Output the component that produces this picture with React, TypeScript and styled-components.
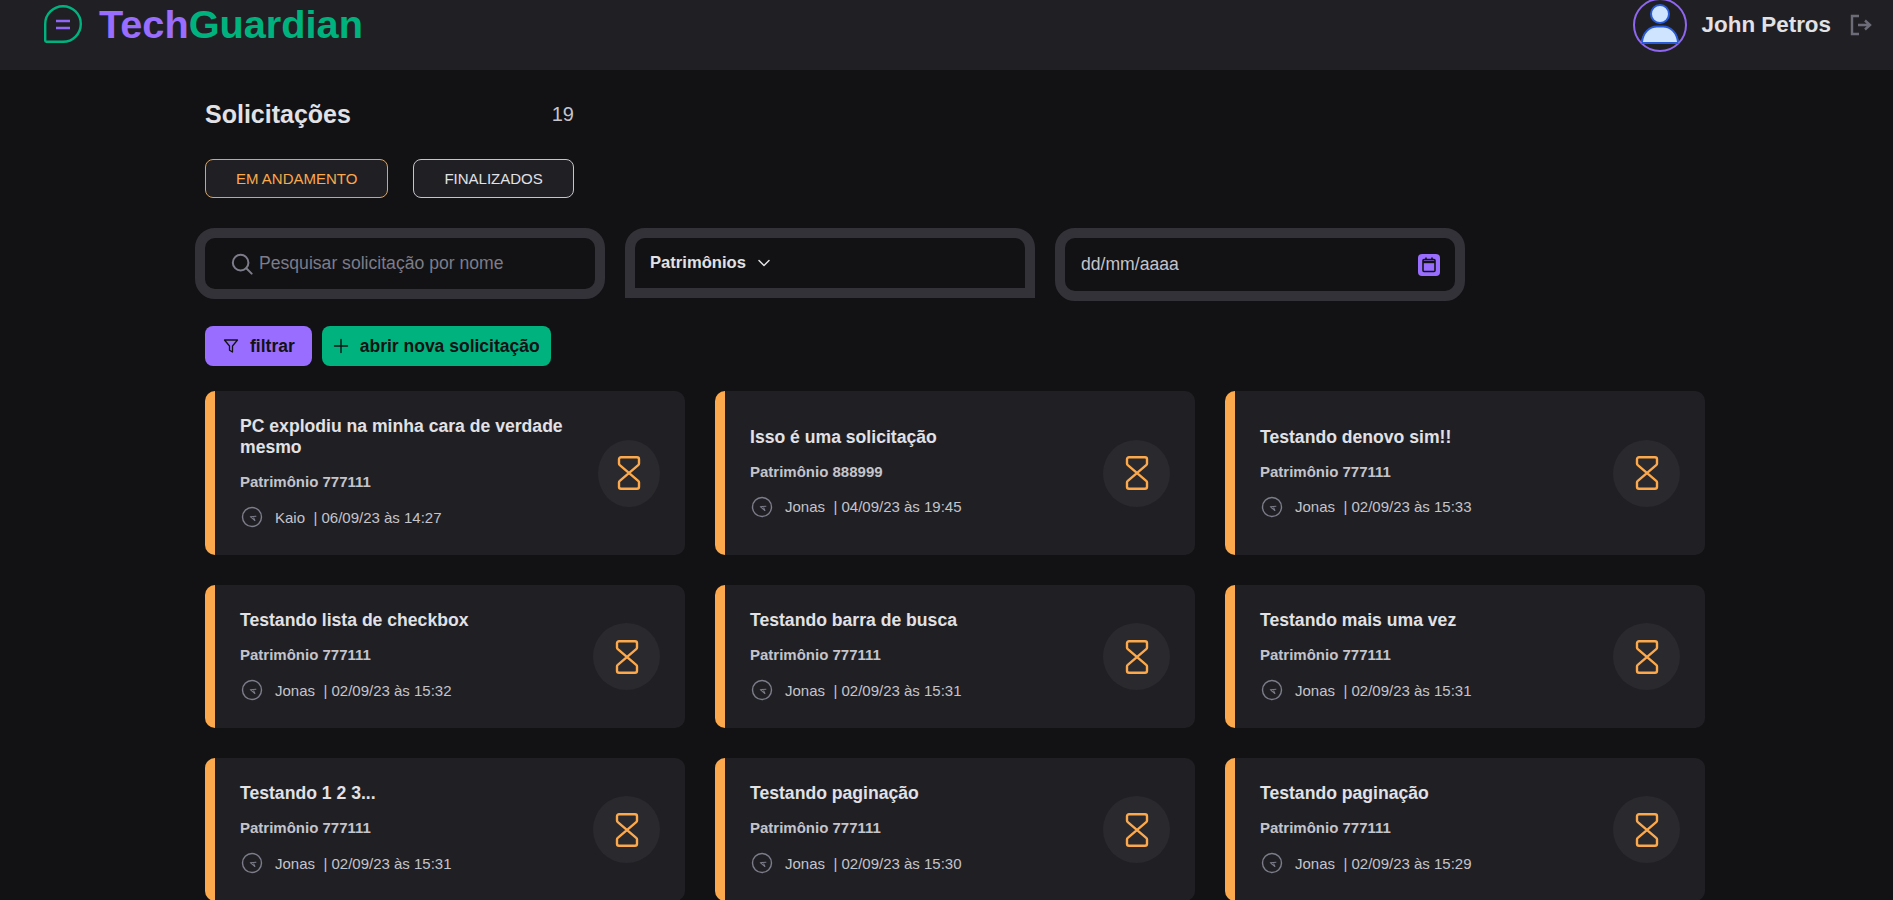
import styled, { createGlobalStyle } from 'styled-components'

const requests = [
  { title: 'PC explodiu na minha cara de verdade mesmo', asset: '777111', user: 'Kaio', date: '06/09/23 às 14:27' },
  { title: 'Isso é uma solicitação', asset: '888999', user: 'Jonas', date: '04/09/23 às 19:45' },
  { title: 'Testando denovo sim!!', asset: '777111', user: 'Jonas', date: '02/09/23 às 15:33' },
  { title: 'Testando lista de checkbox', asset: '777111', user: 'Jonas', date: '02/09/23 às 15:32' },
  { title: 'Testando barra de busca', asset: '777111', user: 'Jonas', date: '02/09/23 às 15:31' },
  { title: 'Testando mais uma vez', asset: '777111', user: 'Jonas', date: '02/09/23 às 15:31' },
  { title: 'Testando 1 2 3...', asset: '777111', user: 'Jonas', date: '02/09/23 às 15:31' },
  { title: 'Testando paginação', asset: '777111', user: 'Jonas', date: '02/09/23 às 15:30' },
  { title: 'Testando paginação', asset: '777111', user: 'Jonas', date: '02/09/23 às 15:29' },
]

function LogoIcon() {
  return (
    <LogoSvg viewBox="0 0 38 38" fill="none">
      <path
        d="M1.2 35.6V19A17.8 17.8 0 1 1 19 36.8H2.4A1.2 1.2 0 0 1 1.2 35.6Z"
        stroke="#00B37E"
        strokeWidth="2.4"
      />
      <path d="M12 16h14M12 23h14" stroke="#8F66F5" strokeWidth="2.4" />
    </LogoSvg>
  )
}

function UserIcon() {
  return (
    <svg width="54" height="54" viewBox="0 0 54 54" fill="none">
      <circle cx="27" cy="27" r="26" stroke="#8F66F0" strokeWidth="2" />
      <circle cx="27" cy="16" r="9" fill="#CFE4FF" stroke="#2A5BD7" strokeWidth="2" />
      <path d="M8.5 45c0-9 7-16 15-16h7c8 0 15 7 15 16z" fill="#CFE4FF" />
      <path
        d="M9 44c1-9 7-15.5 15-15.5h6c8 0 14 6.500 15 15.500M8.500 45h37"
        stroke="#2A5BD7"
        strokeWidth="2"
      />
    </svg>
  )
}

function LogoutIcon() {
  return (
    <svg width="22" height="22" viewBox="0 0 22 22" fill="none" stroke="#6C6C78" strokeWidth="2.400">
      <path d="M9 2H2v18h7" />
      <path d="M8 11h12M15 6.500l5 4.500-5 4.500" />
    </svg>
  )
}

function SearchIcon() {
  return (
    <svg width="22" height="22" viewBox="0 0 24 24" fill="none" stroke="#7C7C8A" strokeWidth="2.200" strokeLinecap="round">
      <circle cx="10.500" cy="10.500" r="8.500" />
      <path d="M16.700 16.700L22.500 22.500" />
    </svg>
  )
}

function CaretIcon() {
  return (
    <svg width="16" height="16" viewBox="0 0 16 16" fill="none" stroke="#E1E1E6" strokeWidth="1.500" strokeLinecap="round" strokeLinejoin="round">
      <path d="M3 5.500l5 5 5-5" />
    </svg>
  )
}

function CalendarIcon() {
  return (
    <CalendarBadge>
      <svg width="14" height="16" viewBox="0 0 14 16" fill="none" stroke="#121214" strokeWidth="1.600">
        <rect x="1" y="2.500" width="12" height="12" rx="1" />
        <path d="M1 5h12" strokeWidth="2.400" />
        <path d="M4 .500v2M10 .500v2" />
      </svg>
    </CalendarBadge>
  )
}

function FunnelIcon() {
  return (
    <svg width="16" height="16" viewBox="0 0 16 16" fill="none" stroke="#121214" strokeWidth="1.300" strokeLinejoin="round">
      <path d="M1.500 2h13l-5 6v6l-3-1.800V8z" />
    </svg>
  )
}

function PlusIcon() {
  return (
    <svg width="16" height="16" viewBox="0 0 16 16" fill="none" stroke="#121214" strokeWidth="1.400" strokeLinecap="round">
      <path d="M1.500 8h13M8 1.500v13" />
    </svg>
  )
}

function ClockIcon() {
  return (
    <svg width="22" height="22" viewBox="0 0 22 22" fill="none" stroke="#7C7C8A" strokeWidth="1.400" strokeLinejoin="round">
      <circle cx="11" cy="11" r="9.500" />
      <path d="M15.300 10.200L9.300 10.700L14 14.700" strokeWidth="1.100" />
      <path d="M12.500 11.500L14 14.700" strokeWidth="1.100" />
    </svg>
  )
}

function HourglassIcon() {
  return (
    <svg width="24" height="34" viewBox="0 0 24 34" fill="none" stroke="#FBA94C" strokeWidth="2.400" strokeLinejoin="round">
      <path d="M4 1.200h16a2 2 0 0 1 2 2v4.300a2 2 0 0 1-.8 1.600L2.800 24.900A2 2 0 0 0 2 26.500v4.300a2 2 0 0 0 2 2h16a2 2 0 0 0 2-2v-4.300a2 2 0 0 0-.8-1.600L2.800 9.100A2 2 0 0 1 2 7.500V3.200a2 2 0 0 1 2-2z" />
    </svg>
  )
}

export default function App() {
  return (
    <>
      <GlobalStyle />
      <Header>
        <Brand>
          <LogoIcon />
          <BrandName>
            <span>Tech</span>
            <BrandAccent>Guardian</BrandAccent>
          </BrandName>
        </Brand>
        <Account>
          <UserIcon />
          <UserName>John Petros</UserName>
          <LogoutIcon />
        </Account>
      </Header>
      <Main>
        <TitleRow>
          <PageTitle>Solicitações</PageTitle>
          <Count>19</Count>
        </TitleRow>
        <Tabs>
          <Tab $active>EM ANDAMENTO</Tab>
          <Tab>FINALIZADOS</Tab>
        </Tabs>
        <Filters>
          <FieldBox>
            <SearchIcon />
            <SearchInput placeholder="Pesquisar solicitação por nome" />
          </FieldBox>
          <SelectBox>
            <SelectLabel>Patrimônios</SelectLabel>
            <CaretIcon />
          </SelectBox>
          <DateBox>
            <DateText>dd/mm/aaaa</DateText>
            <CalendarIcon />
          </DateBox>
        </Filters>
        <Actions>
          <ActionButton $bg="#996DFF" $padding="0 17px 0 18px">
            <FunnelIcon />
            filtrar
          </ActionButton>
          <ActionButton $bg="#00B37E" $padding="0 11px">
            <PlusIcon />
            abrir nova solicitação
          </ActionButton>
        </Actions>
        <CardGrid>
          {requests.map((item, index) => (
            <Card key={index}>
              <CardBody>
                <CardTitle>{item.title}</CardTitle>
                <CardAsset>Patrimônio {item.asset}</CardAsset>
                <CardMeta>
                  <ClockIcon />
                  <MetaText>
                    {item.user}
                    {'\u00a0 '}| {item.date}
                  </MetaText>
                </CardMeta>
              </CardBody>
              <StatusCircle>
                <HourglassIcon />
              </StatusCircle>
            </Card>
          ))}
        </CardGrid>
      </Main>
    </>
  )
}

const GlobalStyle = createGlobalStyle`
  * {
    box-sizing: border-box;
  }
  html, body {
    margin: 0;
    height: 100vh;
    overflow: hidden;
    background: #121214;
    font-family: 'Liberation Sans', Arial, sans-serif;
  }
`

const Header = styled.header`
  height: 70px;
  background: #202024;
  display: flex;
  align-items: flex-start;
  justify-content: space-between;
  padding: 0 21px 0 44px;
`

const Brand = styled.div`
  display: flex;
  align-items: center;
  gap: 17px;
  height: 48px;
`

const LogoSvg = styled.svg`
  width: 38px;
  height: 38px;
`

const BrandName = styled.div`
  font-size: 39.7px;
  font-weight: 700;
  color: #996dff;
`

const BrandAccent = styled.span`
  color: #00b37e;
`

const Account = styled.div`
  display: flex;
  align-items: center;
  height: 52px;
  margin-top: -1px;
  gap: 15px;
`

const UserName = styled.span`
  font-size: 22.4px;
  font-weight: 700;
  color: #e1e1e6;
  margin-right: 4px;
`

const Main = styled.main`
  padding: 0 0 0 205px;
`

const TitleRow = styled.div`
  display: flex;
  align-items: center;
  justify-content: space-between;
  width: 369px;
  height: 28px;
  margin-top: 30px;
`

const PageTitle = styled.h1`
  margin: 0;
  font-size: 25px;
  font-weight: 700;
  color: #e1e1e6;
`

const Count = styled.span`
  font-size: 20px;
  color: #c4c4cc;
`

const Tabs = styled.div`
  display: flex;
  gap: 25px;
  margin-top: 31px;
`

const Tab = styled.button<{ $active?: boolean }>`
  height: 39px;
  padding: 0 30px;
  border-radius: 8px;
  background: #202024;
  border: 1px solid ${(p) => (p.$active ? '#E8A04C' : '#C4C4CC')};
  color: ${(p) => (p.$active ? '#FBA94C' : '#E1E1E6')};
  font-family: inherit;
  font-size: 15px;
`

const Filters = styled.div`
  display: flex;
  align-items: flex-start;
  gap: 20px;
  margin: 30px 0 0 -10px;
`

const FieldBox = styled.div`
  width: 410px;
  height: 71px;
  border: 10px solid #323238;
  border-radius: 20px;
  background: #121214;
  display: flex;
  align-items: center;
  gap: 6px;
  padding: 0 26px;
`

const SearchInput = styled.input`
  flex: 1;
  min-width: 0;
  border: 0;
  outline: 0;
  padding: 0;
  background: transparent;
  color: #e1e1e6;
  font-family: inherit;
  font-size: 17.6px;
  &::placeholder {
    color: #7c7c8a;
    opacity: 1;
  }
`

const SelectBox = styled.div`
  width: 410px;
  height: 70px;
  border: 10px solid #323238;
  border-radius: 20px 20px 0 0;
  background: #121214;
  display: flex;
  align-items: center;
  gap: 10px;
  padding: 0 15px;
`

const SelectLabel = styled.span`
  font-size: 16.6px;
  font-weight: 700;
  color: #e1e1e6;
`

const DateBox = styled(FieldBox)`
  height: 73px;
  justify-content: space-between;
  padding: 0 15px 0 16px;
`

const DateText = styled.span`
  font-size: 17.6px;
  color: #c4c4cc;
`

const CalendarBadge = styled.span`
  width: 22px;
  height: 22px;
  border-radius: 4px;
  background: #996dff;
  display: flex;
  align-items: center;
  justify-content: center;
`

const Actions = styled.div`
  display: flex;
  gap: 10px;
  margin-top: 25px;
`

const ActionButton = styled.button<{ $bg: string; $padding: string }>`
  height: 40px;
  padding: ${(p) => p.$padding};
  border: 0;
  border-radius: 8px;
  background: ${(p) => p.$bg};
  color: #121214;
  display: flex;
  align-items: center;
  gap: 11px;
  font-family: inherit;
  font-size: 17.5px;
  font-weight: 700;
`

const CardGrid = styled.div`
  display: grid;
  grid-template-columns: repeat(3, 480px);
  column-gap: 30px;
  row-gap: 30px;
  margin-top: 25px;
`

const Card = styled.article`
  display: flex;
  align-items: center;
  justify-content: space-between;
  padding: 25px;
  background: #202024;
  border-left: 10px solid #fba94c;
  border-radius: 10px;
`

const CardBody = styled.div`
  display: flex;
  flex-direction: column;
  gap: 15px;
  padding-bottom: 2px;
`

const CardTitle = styled.h2`
  margin: 0;
  font-size: 17.6px;
  font-weight: 700;
  color: #e1e1e6;
`

const CardAsset = styled.p`
  margin: 0;
  font-size: 15px;
  font-weight: 700;
  color: #c4c4cc;
`

const CardMeta = styled.div`
  display: flex;
  align-items: center;
  gap: 12px;
  margin-top: 1px;
  padding-left: 1px;
`

const MetaText = styled.span`
  font-size: 15px;
  color: #c4c4cc;
`

const StatusCircle = styled.div`
  width: 67px;
  height: 67px;
  border-radius: 50%;
  background: #29292e;
  display: flex;
  align-items: center;
  justify-content: center;
`
